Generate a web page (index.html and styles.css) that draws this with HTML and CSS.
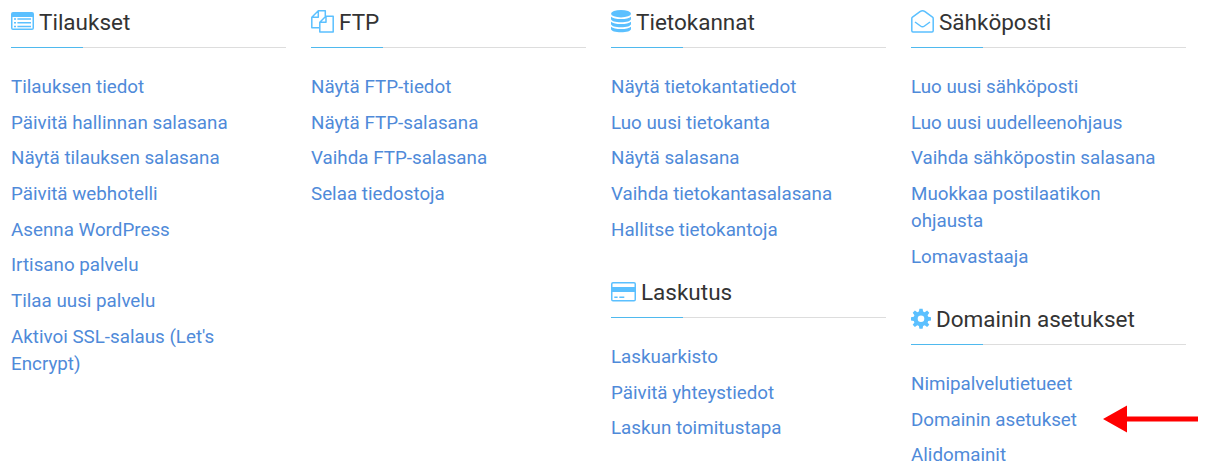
FILE: index.html
```html
<!DOCTYPE html>
<html lang="fi">
<head>
    <meta charset="UTF-8">
    <meta name="viewport" content="width=device-width, initial-scale=1.0">
    <title>Hallinta</title>
    <link rel="stylesheet" href="styles.css">
</head>
<body>
    <div class="menu">
        <div class="column">
            <div class="section">
                <h2 class="title">
                    <svg class="icon" width="23" height="24" viewBox="0 0 23 24">
                        <path fill-rule="evenodd" d="M2 3h19a2 2 0 0 1 2 2v14a2 2 0 0 1-2 2H2a2 2 0 0 1-2-2V5a2 2 0 0 1 2-2zM1.500 8v11q0 .5.5.5h19q.5 0 .5-.5V8z"/>
                        <path d="M3 9.300h2v1.500H3zM3 13h2v1.500H3zM3 16.700h2v1.500H3zM6.400 9.300H20v1.500H6.400zM6.400 13H20v1.500H6.400zM6.400 16.700H20v1.500H6.400z"/>
                    </svg>
                    <span>Tilaukset</span>
                </h2>
                <ul class="links">
                    <li><a href="#">Tilauksen tiedot</a></li>
                    <li><a href="#">Päivitä hallinnan salasana</a></li>
                    <li><a href="#">Näytä tilauksen salasana</a></li>
                    <li><a href="#">Päivitä webhotelli</a></li>
                    <li><a href="#">Asenna WordPress</a></li>
                    <li><a href="#">Irtisano palvelu</a></li>
                    <li><a href="#">Tilaa uusi palvelu</a></li>
                    <li><a href="#">Aktivoi SSL-salaus (Let's Encrypt)</a></li>
                </ul>
            </div>
        </div>
        <div class="column">
            <div class="section">
                <h2 class="title">
                    <svg class="icon line" width="23" height="24" viewBox="0 0 23 24">
                        <path d="M8 18.700H.8V8.200l6.500-6.400h7v5.400M7.300 1.800v6.400H.8"/>
                        <path d="M8.800 13.300l6-6.100h7.400v15.800H8.800zM15 7.200v6.100H8.800"/>
                    </svg>
                    <span>FTP</span>
                </h2>
                <ul class="links">
                    <li><a href="#">Näytä FTP-tiedot</a></li>
                    <li><a href="#">Näytä FTP-salasana</a></li>
                    <li><a href="#">Vaihda FTP-salasana</a></li>
                    <li><a href="#">Selaa tiedostoja</a></li>
                </ul>
            </div>
        </div>
        <div class="column">
            <div class="section">
                <h2 class="title">
                    <svg class="icon" width="20" height="24" viewBox="0 0 20 24">
                        <ellipse cx="10" cy="4.700" rx="10" ry="3.700"/>
                        <path d="M0 7.700q3 2.400 10 2.400t10-2.400v2.300c0 2-4.500 3.300-10 3.300s-10-1.300-10-3.300z"/>
                        <path d="M0 12.700q3 2.400 10 2.400t10-2.400v2.300c0 2-4.500 3.300-10 3.300s-10-1.300-10-3.300z"/>
                        <path d="M0 17.700q3 2.400 10 2.400t10-2.400v2.300c0 2-4.500 3.300-10 3.300s-10-1.300-10-3.300z"/>
                    </svg>
                    <span>Tietokannat</span>
                </h2>
                <ul class="links">
                    <li><a href="#">Näytä tietokantatiedot</a></li>
                    <li><a href="#">Luo uusi tietokanta</a></li>
                    <li><a href="#">Näytä salasana</a></li>
                    <li><a href="#">Vaihda tietokantasalasana</a></li>
                    <li><a href="#">Hallitse tietokantoja</a></li>
                </ul>
            </div>
            <div class="section">
                <h2 class="title">
                    <svg class="icon" width="25" height="24" viewBox="0 0 25 24">
                        <path fill-rule="evenodd" d="M2 3h21a2 2 0 0 1 2 2v15.500a2 2 0 0 1-2 2H2a2 2 0 0 1-2-2V5a2 2 0 0 1 2-2zM1.500 5v3h22V5q0-.5-.5-.5H2q-.5 0-.5.5zM1.500 13v7.500q0 .5.5.5h21q.5 0 .5-.5V13z"/>
                        <path d="M3.300 17.500h3.300V19H3.300zM8.300 17.500h5V19h-5z"/>
                    </svg>
                    <span>Laskutus</span>
                </h2>
                <ul class="links">
                    <li><a href="#">Laskuarkisto</a></li>
                    <li><a href="#">Päivitä yhteystiedot</a></li>
                    <li><a href="#">Laskun toimitustapa</a></li>
                </ul>
            </div>
        </div>
        <div class="column">
            <div class="section">
                <h2 class="title">
                    <svg class="icon line" width="23" height="24" viewBox="0 0 23 24">
                        <path d="M.8 9.500q0-.8.7-1.300L9 2.700q2.500-1.900 5 0l7.500 5.500q.7.500.7 1.300v12.300q0 1.200-1.200 1.200H2q-1.200 0-1.200-1.200z"/>
                        <path d="M4 13l5.500 4q2 1.500 4 0L19 13"/>
                    </svg>
                    <span>Sähköposti</span>
                </h2>
                <ul class="links">
                    <li><a href="#">Luo uusi sähköposti</a></li>
                    <li><a href="#">Luo uusi uudelleenohjaus</a></li>
                    <li><a href="#">Vaihda sähköpostin salasana</a></li>
                    <li><a href="#">Muokkaa postilaatikon ohjausta</a></li>
                    <li><a href="#">Lomavastaaja</a></li>
                </ul>
            </div>
            <div class="section">
                <h2 class="title">
                    <svg class="icon" width="20" height="24" viewBox="0 0 20 24">
                        <path fill-rule="evenodd" d="M8.400 2.700h3.200l.5 2.900 1.600.7 2.400-1.700 2.200 2.200-1.700 2.400.6 1.500 2.800.5v3.200l-2.800.5-.6 1.500 1.700 2.400-2.200 2.200-2.400-1.700-1.600.7-.5 2.700H8.400l-.5-2.700-1.600-.7L3.900 21l-2.200-2.200 1.700-2.400-.6-1.500-2.800-.5v-3.200l2.800-.5.6-1.500-1.700-2.400 2.200-2.200 2.400 1.700 1.600-.7zM10 9.400a3.300 3.300 0 1 0 0 6.600 3.300 3.300 0 0 0 0-6.600z"/>
                    </svg>
                    <span>Domainin asetukset</span>
                </h2>
                <ul class="links">
                    <li><a href="#">Nimipalvelutietueet</a></li>
                    <li class="marked">
                        <a href="#">Domainin asetukset</a>
                        <svg class="arrow" width="96" height="28" viewBox="0 0 96 28">
                            <path d="M0 14L24 .5v11h71v5H24v11z"/>
                        </svg>
                    </li>
                    <li><a href="#">Alidomainit</a></li>
                </ul>
            </div>
        </div>
    </div>
</body>
</html>
```

FILE: styles.css
```css
body {
    margin: 0;
    background: #fff;
    font-family: Roboto, "Liberation Sans", sans-serif;
    font-size: 18.8px;
    line-height: 27px;
}

.menu {
    display: grid;
    grid-template-columns: repeat(4, 275px);
    gap: 25px;
    height: 468px;
    padding-left: 11px;
    overflow: hidden;
}

.section {
    padding-bottom: 17.8px;
}

.section:last-child {
    padding-bottom: 0;
}

.title {
    display: flex;
    align-items: center;
    gap: 5px;
    box-sizing: border-box;
    height: 48px;
    margin: 0 0 25.8px;
    padding-bottom: 3px;
    color: #333;
    font-size: 22.5px;
    font-weight: 400;
    border-bottom: 1px solid transparent;
    border-image: linear-gradient(to right, #4fb9ee 72px, #ddd 72px) 1;
}

.icon {
    flex: none;
    margin-bottom: 2px;
    fill: #5bc0ff;
}

.icon.line {
    fill: none;
    stroke: #5bc0ff;
    stroke-width: 1.5;
    stroke-linejoin: round;
}

.links {
    margin: 0;
    padding: 0 20px 0 0;
    list-style: none;
}

.links li {
    margin-bottom: 8.72px;
}

.section:last-child li:last-child {
    margin-bottom: 0;
}

.links a {
    color: #4f8ad9;
    text-decoration: none;
}

/* arrow hangs to the right of the link */
.marked {
    position: relative;
}

.arrow {
    position: absolute;
    left: 192px;
    top: -2px;
    fill: #f00;
}
```
